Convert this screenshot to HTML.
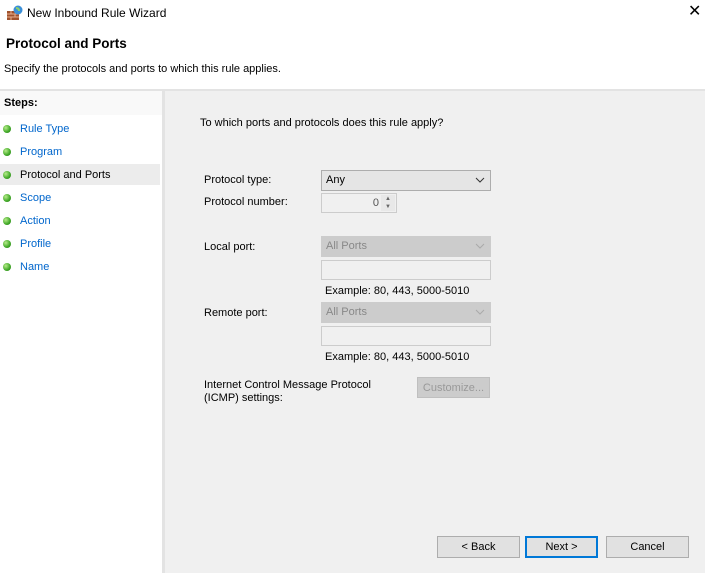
<!DOCTYPE html>
<html><head><style>
*{margin:0;padding:0;box-sizing:border-box}
body{width:705px;height:573px;background:#fff;font-family:"Liberation Sans",sans-serif;font-size:11px;line-height:15px;color:#000;position:relative;overflow:hidden}
.a{position:absolute;white-space:nowrap}
.lnk{color:#0066cc}
.dot{position:absolute;width:8px;height:8px;border-radius:50%;background:radial-gradient(circle at 35% 35%,#b6ec8a,#3fa726 60%,#2a7a18)}
.cb{position:absolute;border:1px solid #adadad;background:#e5e5e5;height:21px;padding:2px 4px}
.dis{background:#ccc;border-color:#ccc;color:#888}
.tb{position:absolute;border:1px solid #ccc;background:#f0f0f0;height:20px}
.btn{position:absolute;border:1px solid #adadad;background:#e1e1e1;height:22px;text-align:center;line-height:21px}
.chev{position:absolute;right:5px;top:4px}
</style></head><body>
<svg class="a" style="left:6px;top:5px" width="18" height="16" viewBox="0 0 18 16"><rect x="1" y="6" width="12" height="9" fill="#a0522d"/><path d="M1 9h12M1 12h12M5 6v3M9 9v3M5 12v3" stroke="#e8b090" stroke-width="1"/><circle cx="12" cy="5" r="4.5" fill="#3b8fd8"/><path d="M10 3c2 0 3 1 3 3" stroke="#8ed06a" stroke-width="2" fill="none"/></svg>
<div class="a" style="left:27px;top:6px;font-size:12px;line-height:14px">New Inbound Rule Wizard</div>
<div class="a" style="left:688px;top:3px;font-size:16px;line-height:18px">✕</div>
<div class="a" style="left:6px;top:36px;font-size:13.5px;line-height:16px;font-weight:bold">Protocol and Ports</div>
<div class="a" style="left:4px;top:62px">Specify the protocols and ports to which this rule applies.</div>
<div class="a" style="left:0;top:89px;width:705px;height:2px;background:#e3e3e3"></div>
<div class="a" style="left:162px;top:91px;width:3px;height:482px;background:#e3e3e3"></div>
<div class="a" style="left:165px;top:91px;width:540px;height:482px;background:#f0f0f0"></div>
<div class="a" style="left:0;top:91px;width:162px;height:24px;background:#f9f9f9"></div>
<div class="a" style="left:4px;top:96px;font-weight:bold">Steps:</div>
<div class="a" style="left:0;top:164px;width:160px;height:21px;background:#ececec"></div>
<div class="dot" style="left:3px;top:125px"></div><div class="a lnk" style="left:20px;top:122px">Rule Type</div>
<div class="dot" style="left:3px;top:148px"></div><div class="a lnk" style="left:20px;top:145px">Program</div>
<div class="dot" style="left:3px;top:171px"></div><div class="a" style="left:20px;top:168px">Protocol and Ports</div>
<div class="dot" style="left:3px;top:194px"></div><div class="a lnk" style="left:20px;top:191px">Scope</div>
<div class="dot" style="left:3px;top:217px"></div><div class="a lnk" style="left:20px;top:214px">Action</div>
<div class="dot" style="left:3px;top:240px"></div><div class="a lnk" style="left:20px;top:237px">Profile</div>
<div class="dot" style="left:3px;top:263px"></div><div class="a lnk" style="left:20px;top:260px">Name</div>
<div class="a" style="left:200px;top:116px">To which ports and protocols does this rule apply?</div>
<div class="a" style="left:204px;top:173px">Protocol type:</div>
<div class="cb" style="left:321px;top:170px;width:170px">Any<svg class="chev" width="10" height="10"><path d="M1 3l4 4 4-4" stroke="#333" fill="none"/></svg></div>
<div class="a" style="left:204px;top:195px">Protocol number:</div>
<div class="tb" style="left:321px;top:193px;width:76px"><span class="a" style="right:17px;top:2px;color:#555">0</span><div class="a" style="right:1px;top:1px;width:14px;height:16px;background:#e8e8e8;font-size:6px;color:#666;text-align:center;line-height:8px">▲<br>▼</div></div>
<div class="a" style="left:204px;top:240px">Local port:</div>
<div class="cb dis" style="left:321px;top:236px;width:170px">All Ports<svg class="chev" width="10" height="10"><path d="M1 3l4 4 4-4" stroke="#aaa" fill="none"/></svg></div>
<div class="tb" style="left:321px;top:260px;width:170px"></div>
<div class="a" style="left:325px;top:284px">Example: 80, 443, 5000-5010</div>
<div class="a" style="left:204px;top:306px">Remote port:</div>
<div class="cb dis" style="left:321px;top:302px;width:170px">All Ports<svg class="chev" width="10" height="10"><path d="M1 3l4 4 4-4" stroke="#aaa" fill="none"/></svg></div>
<div class="tb" style="left:321px;top:326px;width:170px"></div>
<div class="a" style="left:325px;top:350px">Example: 80, 443, 5000-5010</div>
<div class="a" style="left:204px;top:379px;line-height:13px">Internet Control Message Protocol<br>(ICMP) settings:</div>
<div class="btn" style="left:417px;top:377px;width:73px;height:21px;background:#ccc;border-color:#bfbfbf;color:#999;line-height:20px">Customize...</div>
<div class="btn" style="left:437px;top:536px;width:83px">&lt; Back</div>
<div class="btn" style="left:525px;top:536px;width:73px;border:2px solid #0078d7;line-height:19px">Next &gt;</div>
<div class="btn" style="left:606px;top:536px;width:83px">Cancel</div>
</body></html>
